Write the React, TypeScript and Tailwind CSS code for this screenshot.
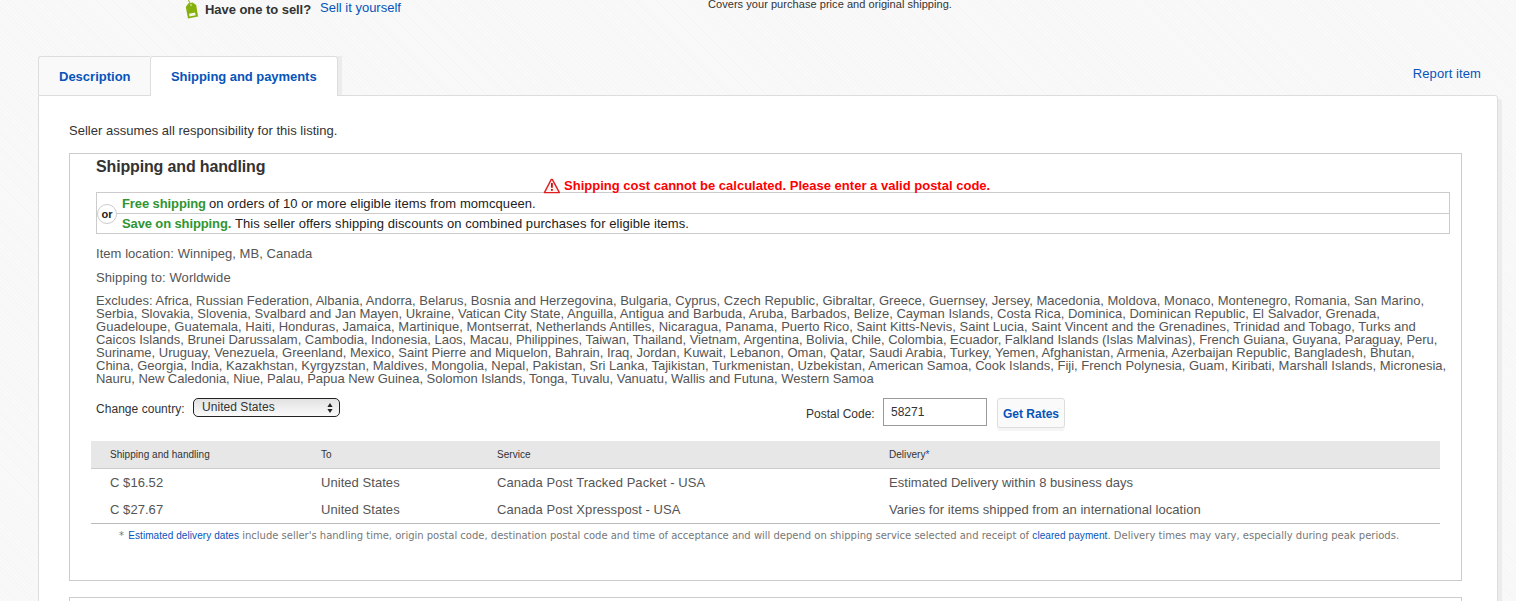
const excludes: [string, string][] = [
  ["Excludes: Africa, Russian Federation, Albania, Andorra, Belarus, Bosnia and Herzegovina, Bulgaria, Cyprus, Czech Republic, Gibraltar, Greece, Guernsey, Jersey, Macedonia, Moldova, Monaco, Montenegro, Romania, San Marino,", "tracking-[0.019px]"],
  ["Serbia, Slovakia, Slovenia, Svalbard and Jan Mayen, Ukraine, Vatican City State, Anguilla, Antigua and Barbuda, Aruba, Barbados, Belize, Cayman Islands, Costa Rica, Dominica, Dominican Republic, El Salvador, Grenada,", "tracking-[0.01px]"],
  ["Guadeloupe, Guatemala, Haiti, Honduras, Jamaica, Martinique, Montserrat, Netherlands Antilles, Nicaragua, Panama, Puerto Rico, Saint Kitts-Nevis, Saint Lucia, Saint Vincent and the Grenadines, Trinidad and Tobago, Turks and", "tracking-[0.02px]"],
  ["Caicos Islands, Brunei Darussalam, Cambodia, Indonesia, Laos, Macau, Philippines, Taiwan, Thailand, Vietnam, Argentina, Bolivia, Chile, Colombia, Ecuador, Falkland Islands (Islas Malvinas), French Guiana, Guyana, Paraguay, Peru,", "tracking-[-0.02px]"],
  ["Suriname, Uruguay, Venezuela, Greenland, Mexico, Saint Pierre and Miquelon, Bahrain, Iraq, Jordan, Kuwait, Lebanon, Oman, Qatar, Saudi Arabia, Turkey, Yemen, Afghanistan, Armenia, Azerbaijan Republic, Bangladesh, Bhutan,", "tracking-[-0.005px]"],
  ["China, Georgia, India, Kazakhstan, Kyrgyzstan, Maldives, Mongolia, Nepal, Pakistan, Sri Lanka, Tajikistan, Turkmenistan, Uzbekistan, American Samoa, Cook Islands, Fiji, French Polynesia, Guam, Kiribati, Marshall Islands, Micronesia,", "tracking-[0px]"],
  ["Nauru, New Caledonia, Niue, Palau, Papua New Guinea, Solomon Islands, Tonga, Tuvalu, Vanuatu, Wallis and Futuna, Western Samoa", "tracking-[-0.035px]"],
];

const rates = [
  ["C $16.52", "United States", "Canada Post Tracked Packet - USA", "Estimated Delivery within 8 business days"],
  ["C $27.67", "United States", "Canada Post Xpresspost - USA", "Varies for items shipped from an international location"],
];

function TagIcon() {
  return (
    <svg width="15" height="19" viewBox="0 0 15 19" className="block shrink-0">
      <path d="M4.4 0L6.6 4.4" stroke="#9ebb2b" strokeWidth="1.1" fill="none" />
      <path d="M1.8 7L4.2 3.6L8.6 2.6L12.2 5L14 16.4L4 18.6Z" fill="#86b00c" />
      <path d="M5 13.8L11 12.6L11.6 15.2L5.6 16.4Z" fill="#f4f8e6" />
      <circle cx="7" cy="5" r="0.8" fill="#f4f8e6" />
    </svg>
  );
}

function WarningIcon() {
  return (
    <svg width="18" height="16" viewBox="0 0 18 16" className="block shrink-0">
      <path d="M8.3 1.4L1.4 14.6H16.4L9.3 1.4Z" fill="#fff0ee" stroke="#dd2020" strokeWidth="1.4" strokeLinejoin="round" />
      <path d="M8.9 5V9.8M8.9 11V12.8" stroke="#c01010" strokeWidth="1.8" />
    </svg>
  );
}

export default function App() {
  return (
    <div className="flex h-[601px] w-[1516px] flex-col overflow-hidden bg-[#f7f7f7] bg-[repeating-linear-gradient(45deg,#f6f6f6_0px,#f6f6f6_1px,#f9f9f9_1px,#f9f9f9_3px)] font-['Liberation_Sans',Arial,sans-serif] text-[13px] leading-4 whitespace-nowrap text-[#333]">
      <header className="flex h-14 shrink-0 items-start pl-[184px]">
        <TagIcon />
        <b className="mt-0.5 ml-1.5 w-[115px] tracking-[-0.05px]">Have one to sell?</b>
        <a className="w-[388px] text-[#0654ba]">Sell it yourself</a>
        <span className="text-[11px] leading-[9px] tracking-[0.05px]">Covers your purchase price and original shipping.</span>
      </header>

      <div className="flex h-[39px] shrink-0 items-start pr-[35px] pl-[38px]">
        <div className="flex h-[39px] w-28 items-center rounded-tl-[3px] border-t border-l border-[#ddd] bg-[#f9f9f9] pt-0.5 pl-5 font-bold text-[#0654ba]">Description</div>
        <div className="relative z-10 flex h-10 w-[188px] items-center rounded-t-[3px] border border-b-0 border-[#ddd] bg-white pt-0.5 pb-px pl-5 font-bold tracking-[-0.05px] text-[#0654ba]">Shipping and payments</div>
        <div className="h-[39px] w-1 bg-[#ececec]" />
        <a className="mt-2.5 ml-auto tracking-[0.09px] text-[#0654ba]">Report item</a>
      </div>

      <main className="ml-[38px] h-[520px] w-[1460px] shrink-0 rounded-tr-[3px] border border-[#ddd] bg-white pt-[27px] pl-[30px] shadow-[4px_4px_0_#ececec]">
        <p className="h-[30px] tracking-[0.02px]">Seller assumes all responsibility for this listing.</p>

        <section className="h-[428px] w-[1393px] border border-[#ccc] pl-[26px]">
          <h2 className="h-6 pt-1 text-base leading-[18px] font-bold tracking-[-0.15px]">Shipping and handling</h2>
          <div className="relative z-10 flex h-3.5 items-start pl-[447px] font-bold text-[#f00]">
            <WarningIcon />
            <span className="ml-[3px] tracking-[0.01px]">Shipping cost cannot be calculated. Please enter a valid postal code.</span>
          </div>

          <div className="relative h-[42px] w-[1354px] border border-[#ccc] text-[#222]">
            <div className="h-[21px] border-b border-[#ccc] pt-[3px] pl-[25px]">
              <b className="inline-block w-[87px] tracking-[-0.1px] text-[#2f9532]">Free shipping</b>
              <span className="tracking-[0.07px]">on orders of 10 or more eligible items from momcqueen.</span>
            </div>
            <div className="pt-0.5 pl-[25px]">
              <b className="inline-block w-[113px] tracking-[-0.12px] text-[#2f9532]">Save on shipping.</b>
              <span className="tracking-[0.07px]">This seller offers shipping discounts on combined purchases for eligible items.</span>
            </div>
            <span className="absolute top-[11px] left-0 flex size-5 items-center justify-center rounded-full border border-[#ccc] bg-white text-[11px] leading-none font-bold">or</span>
          </div>

          <div className="text-[#555]">
            <p className="mt-3 h-6 tracking-[0.05px]">Item location: Winnipeg, MB, Canada</p>
            <p className="h-6 tracking-[0.09px]">Shipping to: Worldwide</p>
            <div className="leading-[13px]">
              {excludes.map(([line, tracking]) => (
                <p key={line} className={tracking}>{line}</p>
              ))}
            </div>
          </div>

          <div className="mt-[13px] flex h-[43px] items-start text-[12px] text-[#333]">
            <span className="mt-[3px] w-[97px] tracking-[0.04px]">Change country:</span>
            <div className="flex h-[19px] w-[147px] items-center justify-between rounded-[5px] border border-[#222] bg-linear-to-b from-[#e2e2e2] to-[#fafafa] pr-[5px] pl-2">
              <span className="pb-0.5 tracking-[0.05px]">United States</span>
              <svg width="8" height="12" viewBox="0 0 8 12">
                <path d="M4 1L6.6 5H1.4ZM4 11L6.6 7H1.4Z" fill="#222" />
              </svg>
            </div>
            <span className="mt-2 ml-[466px] w-[77px]">Postal Code:</span>
            <div className="h-7 w-[104px] border border-[#999] bg-white pt-[5px] pl-[7px]">58271</div>
            <div className="ml-2.5 h-[30px] w-[68px] rounded-[3px] border border-[#ddd] bg-[#fafafa] pt-[7px] text-center font-bold text-[#0654ba] shadow-[0_3px_0_#f5f5f5]">Get Rates</div>
          </div>

          <div className="-ml-[5px] w-[1349px] border-b border-[#bbb] text-[#555]">
            <div className="grid h-7 grid-cols-[211px_176px_392px_1fr] items-center border-b border-[#ccc] bg-[#e7e7e7] pl-[19px] text-[10px] tracking-[0.04px] text-[#333]">
              <span>Shipping and handling</span>
              <span>To</span>
              <span>Service</span>
              <span>Delivery<span className="text-[#0654ba]">*</span></span>
            </div>
            {rates.map((row) => (
              <div key={row[0]} className="grid h-[27px] grid-cols-[211px_176px_392px_1fr] items-center pl-[19px] tracking-[0.05px]">
                {row.map((cell) => (
                  <span key={cell}>{cell}</span>
                ))}
              </div>
            ))}
          </div>
          <p className="mt-1 pl-[23px] font-['DejaVu_Sans',sans-serif] text-[10px] text-[#777]">
            <span className="tracking-[0.5px]">* </span><a className="font-['Liberation_Sans',Arial,sans-serif] tracking-[0.08px] text-[#0654ba]">Estimated delivery dates</a> <span className="tracking-[-0.01px]">include seller's handling time, origin postal code, destination postal code and time of acceptance and will depend on shipping service selected and receipt of </span>
            <a className="font-['Liberation_Sans',Arial,sans-serif] tracking-[0.08px] text-[#0654ba]">cleared payment</a><span>. Delivery times may vary, especially during peak periods.</span>
          </p>
        </section>
        <section className="mt-4 h-20 w-[1393px] border border-[#ccc]" />
      </main>
    </div>
  );
}
